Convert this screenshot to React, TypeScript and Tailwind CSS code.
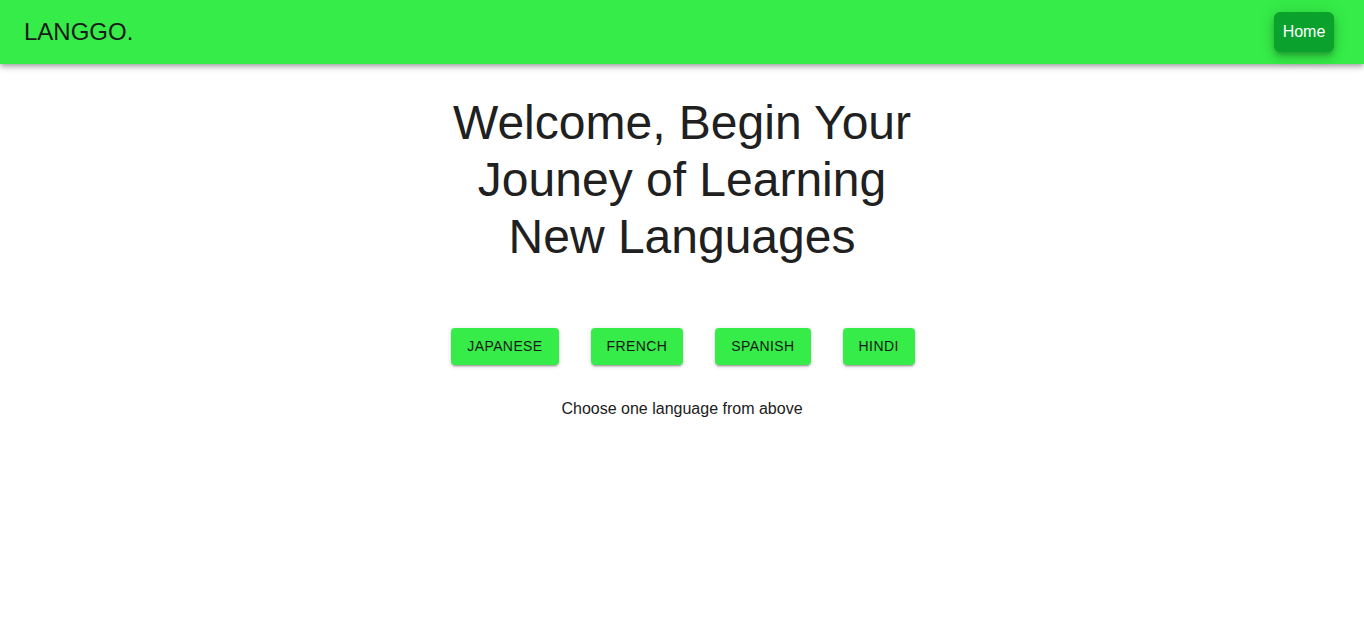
import React from "react";

export default function App() {
  const langs = ["JAPANESE", "FRENCH", "SPANISH", "HINDI"];
  return (
    <div className="min-h-[628px] bg-white" style={{ fontFamily: '"Liberation Sans", Arial, sans-serif' }}>
      <header className="relative z-10 flex h-16 items-center justify-between bg-[#35ec48] pl-6 pr-[30px] shadow-[0_2px_4px_-1px_rgba(0,0,0,0.2),0_4px_5px_0_rgba(0,0,0,0.14),0_1px_10px_0_rgba(0,0,0,0.12)]">
        <div className="text-[24px] leading-none text-[#1a1a1a]">LANGGO.</div>
        <button className="h-10 w-[60px] rounded-md bg-[#0aa12d] text-[16px] text-white shadow-[0_3px_5px_-1px_rgba(0,0,0,0.2),0_6px_10px_0_rgba(0,0,0,0.14),0_1px_18px_0_rgba(0,0,0,0.12)]">
          Home
        </button>
      </header>
      <main className="flex flex-col items-center">
        <h1 className="mt-[30px] w-[470px] text-center text-[48px] leading-[57px] text-[#202020]">
          Welcome, Begin Your Jouney of Learning New Languages
        </h1>
        <div className="mt-[63px] flex gap-8 pl-[2px]">
          {langs.map((l) => (
            <button
              key={l}
              className="h-[37px] rounded px-4 bg-[#35ec48] text-[14px] tracking-[0.4px] text-[#1a1a1a] shadow-[0_3px_1px_-2px_rgba(0,0,0,0.2),0_2px_2px_0_rgba(0,0,0,0.14),0_1px_5px_0_rgba(0,0,0,0.12)]"
            >
              {l}
            </button>
          ))}
        </div>
        <p className="mt-[34px] text-[16px] leading-[20px] text-[#202020]">Choose one language from above</p>
      </main>
    </div>
  );
}
